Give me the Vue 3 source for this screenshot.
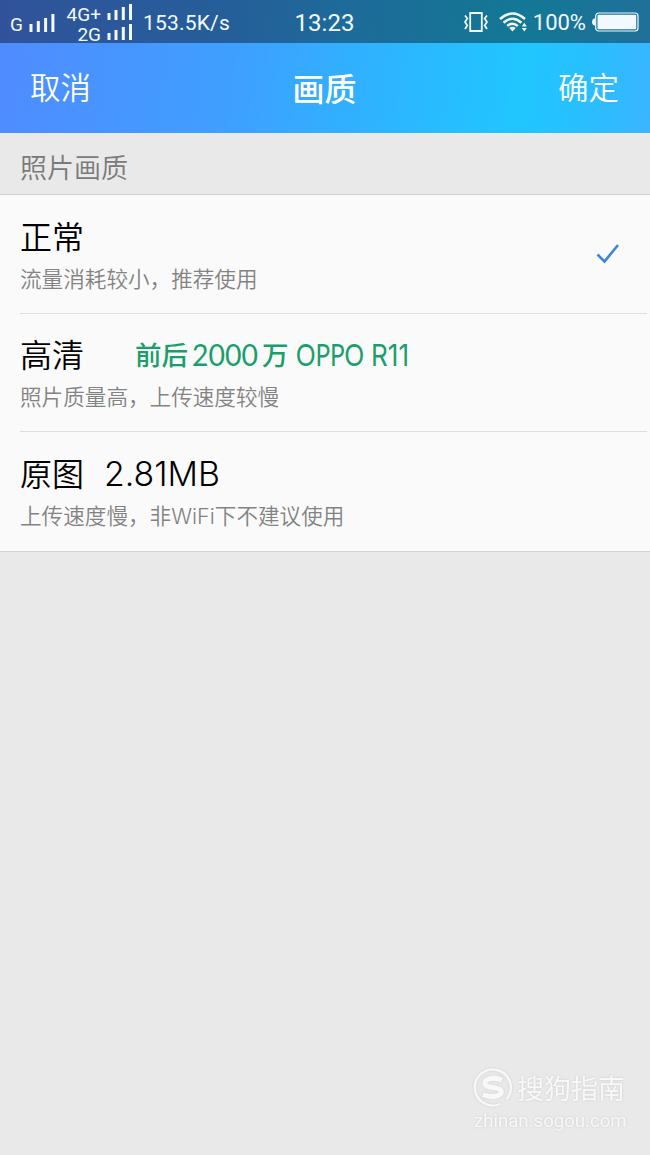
<template>
  <div class="screen">
    <header class="top">
      <div class="status-bar">
        <div class="status-left">
          <span class="net-small">G</span>
          <svg class="signal main" viewBox="0 0 26 20">
            <path d="M2 11v8M9.3 8v11M16.6 5v14M23.9 1v18" />
          </svg>
          <div class="dual">
            <div v-for="net in networks" :key="net" class="dual-row">
              <span class="net-name">{{ net }}</span>
              <svg class="signal" viewBox="0 0 26 17">
                <path d="M2 9v7M9 6v10M16.3 3v13M23.5 0v16" />
              </svg>
            </div>
          </div>
          <span class="speed">153.5K/s</span>
        </div>
        <span class="time">13:23</span>
        <div class="status-right">
          <svg class="vibrate" viewBox="0 0 24 20">
            <path d="M6.2 1h11.6v18H6.2z" stroke-width="1.8" />
            <path d="M1 3.5l2.3 3L1 10l2.3 3.5L1 17M23 3.5l-2.3 3L23 10l-2.3 3.5L23 17" stroke-width="1.8" />
          </svg>
          <svg class="wifi" viewBox="0 0 28 20">
            <path d="M1 7Q13.5-4 26 7" />
            <path d="M4.6 10.7q8.9-8 17.8 0" />
            <path d="M8.2 14q5.3-4.6 10.6 0" />
            <path class="solid" d="M10.3 16q3.2-2.4 6.4 0L13.5 19.4z" />
            <path class="solid" d="M25.3 10.8l2.5 3.6h-5zM25.3 19.6l-2.5-3.6h5z" />
          </svg>
          <span class="percent">100%</span>
          <svg class="battery" viewBox="0 0 47 20">
            <path class="solid" d="M3 6.5H2Q0 7.2 0 10t2 3.5h1z" />
            <rect x="3.7" y="1" width="42.3" height="18" rx="3" />
            <rect class="solid" x="5.5" y="2.8" width="38.7" height="14.4" rx="1" />
          </svg>
        </div>
      </div>
      <div class="nav-bar">
        <span class="action">取消</span>
        <h1 class="title">画质</h1>
        <span class="action confirm">确定</span>
      </div>
    </header>

    <h2 class="section-title">照片画质</h2>

    <ul class="options">
      <li
        v-for="(option, index) in options"
        :key="option.name"
        class="option"
        @click="selected = index"
      >
        <div class="option-text">
          <div class="option-head">
            <span class="name">{{ option.name }}</span>
            <span v-if="option.size" class="size">{{ option.size }}</span>
            <svg v-if="option.ad" class="ad" viewBox="0 0 280 48">
              <text class="ad-cn" x="0" y="36">前后</text>
              <text x="57" y="36.5" textLength="66" lengthAdjust="spacingAndGlyphs">2000</text>
              <text class="ad-cn" x="127" y="36">万</text>
              <text x="161" y="36.5" textLength="68" lengthAdjust="spacingAndGlyphs">OPPO</text>
              <text class="ad-model" x="236" y="36.5" textLength="38" lengthAdjust="spacingAndGlyphs">R11</text>
            </svg>
          </div>
          <p class="desc">{{ option.desc }}</p>
        </div>
        <svg v-if="selected === index" class="check" viewBox="0 0 24 22">
          <path d="M1.5 11.5l7 7L22 2" />
        </svg>
      </li>
    </ul>

    <footer class="watermark">
      <div class="brand">
        <svg class="logo" viewBox="0 0 40 40">
          <path d="M27 36A18 18 0 1 1 33.5 31.2" stroke-width="2.4" />
          <path d="M29 12Q19 8 13 12.5Q9 18 19 19.5Q31 20.5 27.5 26Q21 31 10 26.5" stroke-width="5" />
        </svg>
        <span class="brand-name">搜狗指南</span>
      </div>
      <span class="url">zhinan.sogou.com</span>
    </footer>
  </div>
</template>

<script setup>
import { ref } from "vue";

const selected = ref(0);

const networks = ["4G+", "2G"];

const options = [
  { name: "正常", desc: "流量消耗较小，推荐使用" },
  { name: "高清", desc: "照片质量高，上传速度较慢", ad: true },
  { name: "原图", desc: "上传速度慢，非WiFi下不建议使用", size: "2.81MB" },
];
</script>

<style>
body {
  margin: 0;
  background: #e9e9e9;
}
</style>

<style scoped>
.screen {
  display: flex;
  flex-direction: column;
  box-sizing: border-box;
  width: 650px;
  height: 1155px;
  overflow: hidden;
  background: #e9e9e9;
  font-family: Inter, "Noto Sans CJK SC", sans-serif;
  font-weight: 350;
}

svg {
  display: block;
  flex: none;
  fill: none;
  stroke: currentColor;
}

.solid {
  fill: currentColor;
  stroke: none;
}

.top {
  height: 133px;
  flex: none;
  color: #fff;
  background: linear-gradient(97deg, #508bff 0%, #3f9fff 36%, #31b0ff 54%, #20c6ff 80%, #28bfff 89%, #3ab5ff 100%);
}

.status-bar {
  display: grid;
  grid-template-columns: 1fr auto 1fr;
  align-items: center;
  height: 43px;
  padding: 0 11px 0 10px;
  color: #f2faff;
  font-family: Roboto, sans-serif;
  font-weight: 400;
  background: linear-gradient(97deg, #31529b 0%, #245f99 36%, #1d6b99 54%, #137895 80%, #20709a 100%);
}

.status-left,
.status-right {
  display: flex;
  align-items: center;
}

.status-right {
  justify-content: flex-end;
}

.net-small {
  width: 19px;
  padding-top: 6px;
  font-size: 19px;
}

.signal {
  width: 26px;
  height: 17px;
  stroke-width: 3;
}

.signal.main {
  height: 20px;
  margin-top: 3px;
}

.dual {
  width: 69px;
  margin: 2px 10px 0 9px;
}

.dual-row {
  display: flex;
  justify-content: flex-end;
  align-items: center;
  gap: 6px;
  height: 20.5px;
}

.net-name {
  padding-top: 5px;
  font-size: 19px;
  line-height: 20px;
}

.speed {
  font-size: 21px;
  letter-spacing: 0.2px;
  padding-top: 2px;
}

.time {
  font-size: 24px;
  padding-top: 2px;
}

.vibrate {
  width: 24px;
  height: 20px;
}

.wifi {
  width: 28px;
  height: 20px;
  margin: 0 6px 0 11px;
  stroke-width: 2.5;
}

.percent {
  font-size: 22px;
  padding-top: 2px;
}

.battery {
  width: 47px;
  height: 20px;
  margin-left: 6px;
  stroke-width: 1.2;
}

.nav-bar {
  display: grid;
  grid-template-columns: 1fr auto 1fr;
  align-items: center;
  height: 90px;
  padding: 0 31px 0 30px;
}

.action {
  font-size: 30.5px;
  line-height: 44px;
  margin-bottom: 1px;
}

.confirm {
  text-align: right;
}

.title {
  margin: 4px 0 0;
  font-size: 32px;
  line-height: 44px;
  font-weight: 500;
}

.section-title {
  box-sizing: border-box;
  height: 62px;
  flex: none;
  margin: 0;
  padding-left: 20px;
  border-bottom: 1px solid #d2d2d2;
  color: #7a7a7a;
  font-size: 27px;
  font-weight: 350;
  line-height: 72px;
}

.options {
  margin: 0;
  padding: 0 0 0 20px;
  list-style: none;
  background: #fafafa;
  border-bottom: 1px solid #d2d2d2;
}

.option {
  display: flex;
  align-items: center;
  justify-content: space-between;
  box-sizing: border-box;
  height: 118.6px;
  padding-right: 27px;
  margin-right: 3px;
  border-bottom: 1px solid #dedede;
}

.option:last-child {
  border-bottom: 0;
}

.option-head {
  display: flex;
  align-items: center;
  height: 44px;
  color: #000;
  font-size: 32px;
}

.size {
  margin: 3px 0 0 20px;
  font-size: 33.8px;
  font-weight: 300;
}

.ad {
  width: 280px;
  height: 48px;
  margin-left: 51px;
  fill: #1b9e6b;
  stroke: none;
  font-family: Lato, sans-serif;
  font-size: 31px;
  font-weight: 400;
}

.ad-cn {
  font-family: "Noto Sans CJK SC", sans-serif;
  font-weight: 500;
  font-size: 26.5px;
}

.ad-model {
  font-family: Inter, sans-serif;
  font-size: 30px;
}

.desc {
  margin: 4px 0 -2px;
  height: 36px;
  color: #838383;
  font-size: 21.6px;
  line-height: 36px;
}

.check {
  width: 24px;
  height: 22px;
  color: #3a86d8;
  stroke-width: 2.6;
}

.watermark {
  display: flex;
  flex-direction: column;
  width: 154px;
  margin: auto 23px 21px auto;
  color: #f8f8f8;
  filter: drop-shadow(0 0 1px #ccc);
}

.brand {
  display: flex;
  align-items: center;
  gap: 4px;
}

.logo {
  width: 40px;
  height: 40px;
}

.brand-name {
  padding-top: 3px;
  font-size: 27px;
  line-height: 37px;
  font-weight: 400;
  white-space: nowrap;
}

.url {
  padding-left: 1px;
  font-family: Roboto, sans-serif;
  font-size: 18.6px;
  font-weight: 400;
  line-height: 26px;
}
</style>
